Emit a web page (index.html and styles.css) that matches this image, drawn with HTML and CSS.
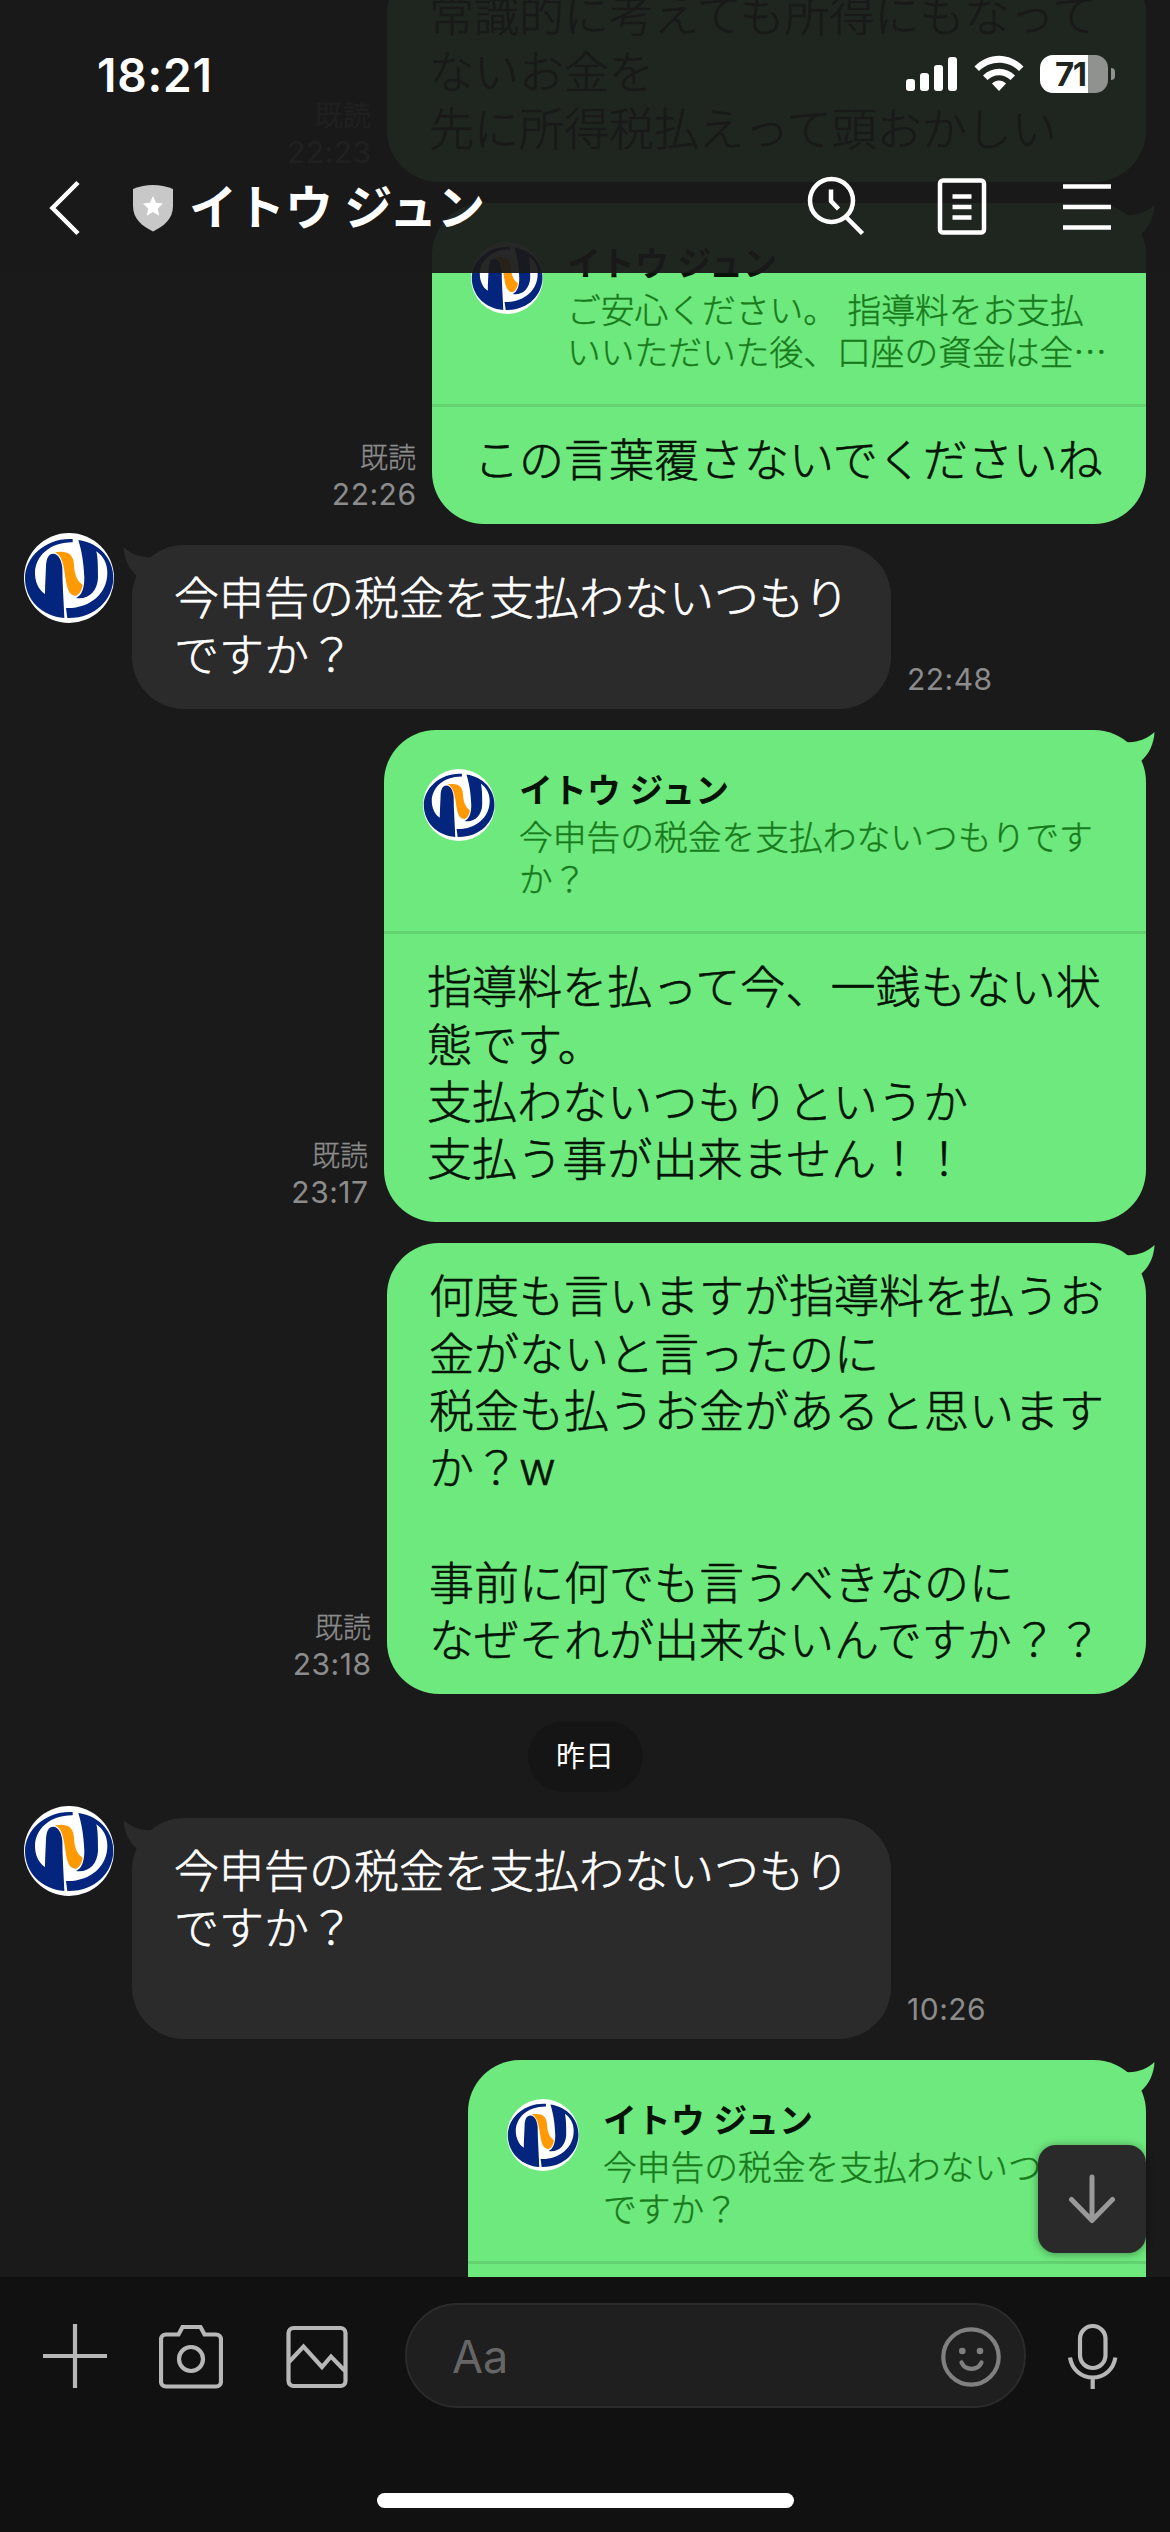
FILE: index.html
```html
<!DOCTYPE html>
<html lang="ja">
<head>
<meta charset="utf-8">
<title>イトウ ジュン</title>
<link rel="stylesheet" href="styles.css">
</head>
<body>
<svg class="defs" aria-hidden="true">
  <symbol id="logo" viewBox="12 15 270 270">
    <circle cx="147" cy="150" r="135" fill="#fff"/>
    <path fill="#03257e" d="M158 33C80 28 15 85 15 150c0 65 50 115 118 120-2-55-6-105-6-150-2-25-12-42-27-43-14 0-21 13-22 38-1 30-3 55-3 83-20-13-30-38-30-63 0-50 45-93 113-92z"/>
    <path fill="#03257e" d="M175 36c65 9 106 59 105 114-1 65-55 122-138 120l-4-30c67 3 124-40 124-105 0-30-12-50-33-65 5 20 5 50 5 80-2 40-29 66-66 60 18-8 25-30 25-60-2-50-8-80-18-114z"/>
    <path fill="#ff9a05" d="M105 73c8-2 17-2 25-1 20 2 30 13 32 38 1 30 10 50 26 60-2 15-8 28-20 33-18-1-23-13-28-33-8-40-8-85-35-97z"/>
  </symbol>
  <symbol id="tail" viewBox="0 0 34 34"><path d="M0 12C12 13 22 9 29.500 2 29 14 24 24 16 31L4 34z"/></symbol>
</svg>

<main class="chat">
  <div class="row sent first">
    <div class="meta">既読<br><span class="time">22:23</span></div>
    <div class="bubble"><p class="text">常識的に考えても所得にもなって<br>ないお金を<br>先に所得税払えって頭おかしい</p></div>
  </div>

  <div class="row sent">
    <div class="meta">既読<br><span class="time">22:26</span></div>
    <div class="bubble reply">
      <svg class="tail"><use href="#tail"/></svg>
      <div class="quote">
        <svg class="quote-avatar"><use href="#logo"/></svg>
        <div><div class="quote-name">イトウ ジュン</div><div class="quote-text">ご安心ください。 指導料をお支払<br>いいただいた後、口座の資金は全⋯</div></div>
      </div>
      <p class="text">この言葉覆さないでくださいね</p>
    </div>
  </div>

  <div class="row received">
    <svg class="avatar"><use href="#logo"/></svg>
    <div class="bubble"><svg class="tail"><use href="#tail"/></svg><p class="text">今申告の税金を支払わないつもり<br>ですか？</p></div>
    <div class="meta"><span class="time">22:48</span></div>
  </div>

  <div class="row sent">
    <div class="meta">既読<br><span class="time">23:17</span></div>
    <div class="bubble reply wide">
      <svg class="tail"><use href="#tail"/></svg>
      <div class="quote">
        <svg class="quote-avatar"><use href="#logo"/></svg>
        <div><div class="quote-name">イトウ ジュン</div><div class="quote-text">今申告の税金を支払わないつもりです<br>か？</div></div>
      </div>
      <p class="text">指導料を払って今、一銭もない状<br>態です。<br>支払わないつもりというか<br>支払う事が出来ません！！</p>
    </div>
  </div>

  <div class="row sent">
    <div class="meta">既読<br><span class="time">23:18</span></div>
    <div class="bubble"><svg class="tail"><use href="#tail"/></svg><p class="text">何度も言いますが指導料を払うお<br>金がないと言ったのに<br>税金も払うお金があると思います<br>か？w<br><br>事前に何でも言うべきなのに<br>なぜそれが出来ないんですか？？</p></div>
  </div>

  <div class="date">昨日</div>

  <div class="row received">
    <svg class="avatar"><use href="#logo"/></svg>
    <div class="bubble"><svg class="tail"><use href="#tail"/></svg><p class="text">今申告の税金を支払わないつもり<br>ですか？<br>&nbsp;</p></div>
    <div class="meta"><span class="time">10:26</span></div>
  </div>

  <div class="row sent">
    <div class="bubble reply last">
      <svg class="tail"><use href="#tail"/></svg>
      <div class="quote">
        <svg class="quote-avatar"><use href="#logo"/></svg>
        <div><div class="quote-name">イトウ ジュン</div><div class="quote-text">今申告の税金を支払わないつもり<br>ですか？</div></div>
      </div>
    </div>
  </div>
  <button class="jump" aria-label="最新へ"><svg width="46" height="50" viewBox="0 0 46 50"><path d="M23 3v43M2.500 25.500 23 46.500l20.500-21"/></svg></button>
</main>

<header class="top">
  <div class="status">
    <span class="clock">18:21</span>
    <div class="indicators">
      <svg width="52" height="38" viewBox="0 0 52 38" fill="#fff"><rect y="24" width="9" height="12" rx="3"/><rect x="14" y="18" width="9" height="18" rx="3"/><rect x="28" y="10" width="9" height="26" rx="3"/><rect x="42" y="2" width="9" height="34" rx="3"/></svg>
      <svg width="50" height="38" viewBox="0 0 50 38" fill="#fff"><path d="M25 36l-7-7.500c4-4 10-4 14 0z"/><path d="M9 20.500c9-9 23-9 32 0l-4.500 4.500c-6.500-6.500-16.500-6.500-23 0z"/><path d="M.500 11.500c14-14.500 35-14.500 49 0L45 16c-11.500-11-28.500-11-40 0z"/></svg>
      <div class="battery"><span class="cell">71</span><i class="nub"></i></div>
    </div>
  </div>
  <div class="bar">
    <svg class="back" width="34" height="56" viewBox="0 0 34 56"><path d="M30 2.500 4.500 28 30 53.500"/></svg>
    <svg class="shield" width="42" height="48" viewBox="0 0 42 48"><path fill="#c8c8c8" d="M1 5C14-.3 28-.3 41 5v17c0 13-9 20-20 25.500C10 42 1 35 1 22z"/><path fill="#fff" d="m21 12 3 6.700 7 .8-5.200 5 1.400 7.200-6.200-3.600-6.200 3.600 1.400-7.200-5.200-5 7-.8z"/></svg>
    <h1 class="title">イトウ ジュン</h1>
    <div class="tools">
      <svg width="60" height="60" viewBox="0 0 60 60"><circle cx="25.500" cy="25.500" r="21.500"/><path d="M25 14.500v11.500l7.500 8M40 42l16.500 16.500"/></svg>
      <svg width="50" height="60" viewBox="0 0 50 60"><rect x="3" y="5.500" width="44" height="52" rx="3"/><path d="M15.500 21.500h19M15.500 32h19M15.500 42.500h19"/></svg>
      <svg width="48" height="60" viewBox="0 0 48 60"><path d="M0 11.500h48M0 32h48M0 52.500h48"/></svg>
    </div>
  </div>
</header>

<footer class="composer">
  <div class="controls">
    <svg width="64" height="68" viewBox="0 0 64 68"><path d="M32 2v64M0 34h64"/></svg>
    <svg class="camera" width="64" height="68" viewBox="0 0 64 68"><path d="M7 12.500h12.500L23.500 5h18l4 7.500H57c3 0 5 2 5 5v42c0 3-2 5-5 5H7c-3 0-5-2-5-5v-42c0-3 2-5 5-5z"/><circle cx="32" cy="37" r="12"/></svg>
    <svg class="photo" width="62" height="68" viewBox="0 0 62 68"><rect x="2.500" y="6" width="57" height="58" rx="5"/><path d="m3 40 14.500-15.500L36 45l9-10.500L59 49"/></svg>
    <div class="field"><span>Aa</span>
      <svg width="60" height="60" viewBox="0 0 60 60"><circle cx="30" cy="30" r="27.700"/><g fill="#808080" stroke="none"><circle cx="21.300" cy="24" r="3.300"/><circle cx="39" cy="24" r="3.300"/></g><path stroke-linecap="round" d="M20.500 35.500c4 8.500 16 8.500 20 0"/></svg>
    </div>
    <svg class="mic" width="50" height="68" viewBox="0 0 50 68"><rect x="12" y="4" width="25.500" height="42" rx="12.750"/><path d="M2 35.500c2 12 11 20 22.700 20s20.700-8 22.700-20M24.700 55.500V67"/></svg>
  </div>
  <div class="home"></div>
</footer>
</body>
</html>
```
FILE: styles.css
```css
* { box-sizing: border-box; }
body {
  margin: 0;
  width: 1170px;
  height: 2532px;
  position: relative;
  overflow: hidden;
  display: flex;
  flex-direction: column;
  background: #1a1a1a;
  color: #fff;
  font-family: Inter, "Noto Sans CJK JP", sans-serif;
}
svg { display: block; flex: none; }
.defs { position: absolute; width: 0; height: 0; }

.chat {
  position: relative;
  height: 2277px;
  flex: none;
  overflow: hidden;
  display: flex;
  flex-direction: column;
  gap: 21px;
  padding: 0 24px;
}
.row { display: flex; flex: none; }
.first { margin-top: -38.500px; }
.sent { justify-content: flex-end; }
.received { align-items: flex-start; }
.received .bubble { margin-left: 18px; }

.bubble {
  position: relative;
  width: 759px;
  border-radius: 52px;
  background: #6ee97d;
  color: #061408;
}
.received .bubble { background: #2b2b2b; color: #fff; }
.text {
  margin: 0;
  padding: 25px 0 24px 42px;
  font-size: 45px;
  font-weight: 300;
  -webkit-text-stroke: .6px;
  line-height: 57.300px;
  white-space: nowrap;
}
.received .text { padding-bottom: 25px; }
.reply { width: 714px; }
.reply.wide { width: 762px; }
.reply.wide .text { padding-left: 43px; letter-spacing: .08px; }
.reply.last { width: 678px; height: 321px; }
.reply .text { padding-bottom: 34px; }

.tail {
  position: absolute;
  top: 0;
  right: -13px;
  width: 34px;
  height: 34px;
  fill: #6ee97d;
}
.received .tail { right: auto; left: -13px; transform: scaleX(-1); fill: #2b2b2b; }

.quote {
  display: flex;
  gap: 24px;
  height: 204px;
  padding: 39px 0 0 39px;
  border-bottom: 3px solid #62d370;
  white-space: nowrap;
}
.quote-avatar { width: 72px; height: 72px; }
.quote-name { font-size: 33.750px; font-weight: 700; line-height: 42px; margin: 1px 0 3px; letter-spacing: .3px; }
.quote-text {
  font-family: "Noto Sans CJK JP", sans-serif;
  font-size: 33.750px;
  font-weight: 300;
  -webkit-text-stroke: .4px;
  line-height: 42px;
  word-spacing: 3px;
  color: #177a1b;
}
.avatar { width: 90px; height: 90px; margin-top: -12px; }

.meta {
  align-self: flex-end;
  margin: 0 16px 11px;
  text-align: right;
  font-size: 28px;
  font-weight: 300;
  -webkit-text-stroke: .3px;
  line-height: 36px;
  color: #8c8c8c;
}
.time { font-size: 30px; font-weight: 400; letter-spacing: .5px; margin-right: -.5px; -webkit-text-stroke: 0; }

.date {
  align-self: center;
  width: 115px;
  height: 71px;
  margin: 6px 0 5px;
  border-radius: 36px;
  background: #151515;
  font-size: 29px;
  line-height: 71px;
  text-align: center;
}

.jump {
  position: absolute;
  right: 24px;
  bottom: 24px;
  width: 108px;
  height: 108px;
  padding: 0;
  border: 0;
  border-radius: 18px;
  background: #2a2a2b;
  box-shadow: 0 1px 8px rgba(0, 0, 0, .4);
  display: grid;
  place-items: center;
}
.jump svg { fill: none; stroke: #999; stroke-width: 5; stroke-linecap: round; stroke-linejoin: round; }

.top {
  position: absolute;
  inset: 0 0 auto;
  height: 273px;
  background: rgba(26, 26, 26, .94);
}
.status {
  height: 150px;
  display: flex;
  justify-content: space-between;
  padding: 55px 55px 0 97px;
}
.clock { font-size: 46px; font-weight: 600; line-height: 40px; letter-spacing: .8px; }
.indicators { display: flex; gap: 16px; align-items: flex-start; }
.battery { display: flex; align-items: center; gap: 3px; }
.cell {
  width: 68px;
  height: 38px;
  border-radius: 13px;
  background: linear-gradient(90deg, #fff 48px, #909290 48px);
  color: #1f2521;
  font-size: 33px;
  font-weight: 700;
  line-height: 38px;
  padding-left: 15px;
  letter-spacing: -1.500px;
}
.nub { width: 4px; height: 12px; border-radius: 0 6px 6px 0; background: #909290; }

.bar { display: flex; align-items: center; height: 116px; padding: 0 59px 0 48px; }
.back, .tools svg { fill: none; stroke: #fff; stroke-width: 4.500; }
.shield { margin-left: 50px; }
.title { margin: 0 auto 0 15px; font-size: 48px; font-weight: 700; line-height: 60px; }
.tools { display: flex; margin-top: -6px; }
.tools svg + svg { margin-left: 71px; }
.tools svg:last-child { margin-left: 76px; }

.composer { flex: 1; background: #111; }
.controls {
  display: flex;
  align-items: center;
  padding: 26px 52px 0 43px;
}
.controls svg { fill: none; stroke: #b7b7b7; stroke-width: 4.200; }
.camera { margin-left: 52px; }
.photo { margin-left: 63px; }
.field {
  display: flex;
  justify-content: space-between;
  align-items: center;
  width: 621px;
  height: 105px;
  margin: 0 auto 0 57px;
  padding: 2px 23px 0 45px;
  border: 2px solid #2b2b2b;
  border-radius: 53px;
  background: #1f1f1f;
  color: #666;
  font-size: 45px;
}
.field .field-icon, .field svg { stroke: #808080; }
.home { width: 417px; height: 15px; margin: 85px auto 0; border-radius: 8px; background: #fff; }
```
